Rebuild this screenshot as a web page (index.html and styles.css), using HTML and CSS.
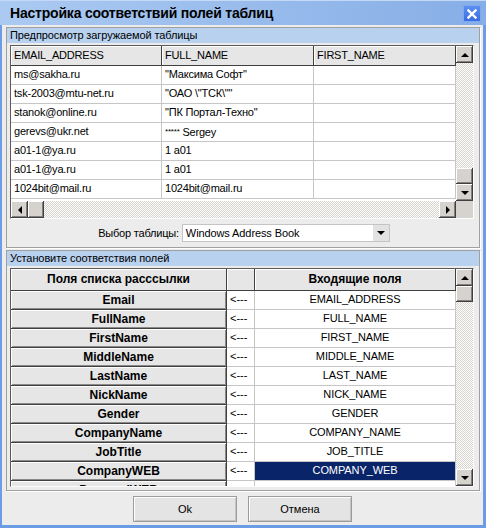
FILE: index.html
```html
<!DOCTYPE html>
<html lang="ru">
<head>
<meta charset="utf-8">
<title>Настройка соответствий полей таблиц</title>
<link rel="stylesheet" href="styles.css">
</head>
<body>
<div class="window">
  <div class="titlebar">
    <span class="title">Настройка соответствий полей таблиц</span>
    <div class="close">
      <svg width="10" height="10" viewBox="0 0 10 10"><path d="M1.5 1.5 L8.5 8.5 M8.5 1.5 L1.5 8.5" stroke="#fff" stroke-width="2.4" stroke-linecap="square"/></svg>
    </div>
  </div>
  <div class="frame">
    <section class="group g1">
      <div class="group-head">Предпросмотр загружаемой таблицы</div>
      <div class="gridframe gf1">
        <div class="grid-top">
          <div class="cells">
            <div class="row head3">
              <div class="hc">EMAIL_ADDRESS</div><div class="hc">FULL_NAME</div><div class="hc">FIRST_NAME</div>
            </div>
            <div class="row data3"><div class="dc">ms@sakha.ru</div><div class="dc">"Максима Софт"</div><div class="dc"></div></div>
            <div class="row data3"><div class="dc">tsk-2003@mtu-net.ru</div><div class="dc">"ОАО \"ТСК\""</div><div class="dc"></div></div>
            <div class="row data3"><div class="dc">stanok@online.ru</div><div class="dc">"ПК Портал-Техно"</div><div class="dc"></div></div>
            <div class="row data3"><div class="dc">gerevs@ukr.net</div><div class="dc"><span class="stars">*****</span> Sergey</div><div class="dc"></div></div>
            <div class="row data3"><div class="dc">a01-1@ya.ru</div><div class="dc">1 a01</div><div class="dc"></div></div>
            <div class="row data3"><div class="dc">a01-1@ya.ru</div><div class="dc">1 a01</div><div class="dc"></div></div>
            <div class="row data3"><div class="dc">1024bit@mail.ru</div><div class="dc">1024bit@mail.ru</div><div class="dc"></div></div>
          </div>
          <div class="vscroll vs1">
            <div class="sbtn"><span class="arr up"></span></div>
            <div class="track"></div>
            <div class="sbtn thumb"></div>
            <div class="sbtn"><span class="arr down"></span></div>
          </div>
        </div>
        <div class="grid-bottom">
          <div class="hscroll">
            <div class="sbtn"><span class="arr left"></span></div>
            <div class="sbtn thumb"></div>
            <div class="track"></div>
            <div class="sbtn"><span class="arr right"></span></div>
          </div>
          <div class="corner"></div>
        </div>
      </div>
      <div class="combo-row">
        <span class="combo-label">Выбор таблицы:</span>
        <div class="combo">
          <span class="combo-text">Windows Address Book</span>
          <span class="combo-btn"><span class="arr down"></span></span>
        </div>
      </div>
    </section>

    <section class="group g2">
      <div class="group-head">Установите соответствия полей</div>
      <div class="gridframe gf2">
        <div class="cells map">
          <div class="row mrow mhead">
            <div class="mh">Поля списка расссылки</div><div class="mh"></div><div class="mh">Входящие поля</div>
          </div>
          <div class="row mrow"><div class="mk">Email</div><div class="ma">&lt;---</div><div class="mv">EMAIL_ADDRESS</div></div>
          <div class="row mrow"><div class="mk">FullName</div><div class="ma">&lt;---</div><div class="mv">FULL_NAME</div></div>
          <div class="row mrow"><div class="mk">FirstName</div><div class="ma">&lt;---</div><div class="mv">FIRST_NAME</div></div>
          <div class="row mrow"><div class="mk">MiddleName</div><div class="ma">&lt;---</div><div class="mv">MIDDLE_NAME</div></div>
          <div class="row mrow"><div class="mk">LastName</div><div class="ma">&lt;---</div><div class="mv">LAST_NAME</div></div>
          <div class="row mrow"><div class="mk">NickName</div><div class="ma">&lt;---</div><div class="mv">NICK_NAME</div></div>
          <div class="row mrow"><div class="mk">Gender</div><div class="ma">&lt;---</div><div class="mv">GENDER</div></div>
          <div class="row mrow"><div class="mk">CompanyName</div><div class="ma">&lt;---</div><div class="mv">COMPANY_NAME</div></div>
          <div class="row mrow"><div class="mk">JobTitle</div><div class="ma">&lt;---</div><div class="mv">JOB_TITLE</div></div>
          <div class="row mrow"><div class="mk">CompanyWEB</div><div class="ma">&lt;---</div><div class="mv sel">COMPANY_WEB</div></div>
          <div class="row mrow"><div class="mk">PersonalWEB</div><div class="ma">&lt;---</div><div class="mv"></div></div>
        </div>
        <div class="vscroll vs2">
          <div class="sbtn"><span class="arr up"></span></div>
          <div class="sbtn thumb"></div>
          <div class="track"></div>
          <div class="sbtn"><span class="arr down"></span></div>
        </div>
      </div>
    </section>

    <div class="buttons">
      <div class="btn">Ok</div>
      <div class="btn">Отмена</div>
    </div>
  </div>
</div>
</body>
</html>
```
FILE: styles.css
```css
* { box-sizing: border-box; }
html, body { margin: 0; padding: 0; }
body {
  width: 486px;
  height: 528px;
  overflow: hidden;
  font-family: "Liberation Sans", Arial, sans-serif;
  font-size: 11px;
  color: #000;
  background: #ececec;
}
.window {
  width: 486px;
  height: 528px;
  display: flex;
  flex-direction: column;
}
.titlebar {
  flex: none;
  height: 25px;
  background: linear-gradient(to right, #abcaf2, #87aee6);
  border-top: 1px solid #c3d9f6;
  display: flex;
  align-items: center;
  justify-content: space-between;
  padding: 0 5px 0 10px;
}
.title {
  font-weight: bold;
  font-size: 14px;
  letter-spacing: -0.2px;
}
.close {
  width: 18px;
  height: 17px;
  margin-top: 1px;
  background: linear-gradient(#5b8ff0, #3a6de0);
  border: 1px solid #7ea8f3;
  display: flex;
  align-items: center;
  justify-content: center;
}
.frame {
  flex: 1;
  border-style: solid;
  border-color: #6d9ce6;
  border-width: 0 3px 3px 2px;
  background: #ececec;
  padding: 2px 3px 0 4px;
  display: flex;
  flex-direction: column;
}
.group {
  border: 1px solid #a0a0a0;
  box-shadow: 1px 1px 0 #fff;
  display: flex;
  flex-direction: column;
  flex: none;
}
.g1 { height: 221px; }
.g2 { height: 241px; margin-top: 2px; }
.group-head {
  height: 15px;
  line-height: 15px;
  background: #b8d1ef;
  padding-left: 3px;
  letter-spacing: -0.1px;
}
.gridframe {
  width: 464px;
  margin: 2px 0 0 3px;
  border: 1px solid;
  border-color: #5a5a5a #fdfdfd #fdfdfd #5a5a5a;
  background: #fff;
  flex: none;
}
.gf1 { height: 174px; display: flex; flex-direction: column; }
.gf2 { height: 219px; display: flex; }
.grid-top { display: flex; height: 155px; }
.cells { width: 445px; overflow: hidden; background: #fff; }
.row { display: grid; }
.head3, .data3 { grid-template-columns: 151px 152px 142px; }
.hc {
  height: 20px;
  line-height: 19px;
  padding-left: 3px;
  background: #e6e6e6;
  border-right: 1px solid #404040;
  border-bottom: 1px solid #404040;
  box-shadow: inset 1px 1px #fff;
  letter-spacing: -0.2px;
  white-space: nowrap;
  overflow: hidden;
}
.dc {
  height: 19px;
  line-height: 17px;
  padding-left: 3px;
  border-right: 1px solid #c6c6c6;
  border-bottom: 1px solid #c6c6c6;
  white-space: nowrap;
  overflow: hidden;
  letter-spacing: -0.2px;
}
.stars { font-size: 8px; vertical-align: 2px; }
.vscroll {
  width: 17px;
  display: flex;
  flex-direction: column;
  flex: none;
}
.vs1 { height: 155px; }
.vs2 { height: 217px; }
.sbtn {
  width: 17px;
  height: 17px;
  flex: none;
  background: #d6d3ce;
  box-shadow: inset -1px -1px #404040, inset 1px 1px #fff, inset -2px -2px #808080;
  display: flex;
  align-items: center;
  justify-content: center;
}
.thumb { height: 16px; }
.hscroll .thumb { width: 16px; height: 17px; }
.track {
  flex: 1;
  background-color: #fff;
  background-image: conic-gradient(#fff 25%, #d6d3ce 0 50%, #fff 0 75%, #d6d3ce 0);
  background-size: 2px 2px;
}
.grid-bottom { display: flex; height: 17px; }
.hscroll { width: 445px; display: flex; }
.corner { flex: 1; background: #d6d3ce; }
.arr { width: 0; height: 0; display: block; }
.arr.up { border-left: 4px solid transparent; border-right: 4px solid transparent; border-bottom: 4px solid #000; }
.arr.down { border-left: 4px solid transparent; border-right: 4px solid transparent; border-top: 4px solid #000; }
.arr.left { border-top: 4px solid transparent; border-bottom: 4px solid transparent; border-right: 4px solid #000; }
.arr.right { border-top: 4px solid transparent; border-bottom: 4px solid transparent; border-left: 4px solid #000; }
.combo-row {
  flex: 1;
  display: flex;
  align-items: center;
  justify-content: center;
  gap: 3px;
  padding-left: 2px;
}
.combo-label { letter-spacing: -0.2px; }
.combo {
  width: 208px;
  height: 18px;
  background: #fff;
  border: 1px solid #c4c4c4;
  display: flex;
  align-items: center;
  justify-content: space-between;
  padding-left: 3px;
}
.combo-text { letter-spacing: -0.1px; }
.combo-btn {
  width: 16px;
  height: 16px;
  background: #e2e2e2;
  display: flex;
  align-items: center;
  justify-content: center;
}
.map { height: 217px; }
.mrow { grid-template-columns: 216px 28px 201px; }
.mh {
  height: 22px;
  line-height: 21px;
  text-align: center;
  font-weight: bold;
  font-size: 12px;
  background: #e6e6e6;
  border-right: 1px solid #404040;
  border-bottom: 1px solid #404040;
  box-shadow: inset 1px 1px #fff;
  white-space: nowrap;
}
.mk {
  height: 19px;
  line-height: 18px;
  text-align: center;
  font-weight: bold;
  font-size: 12px;
  background: #e6e6e6;
  border-right: 1px solid #404040;
  border-bottom: 1px solid #404040;
  box-shadow: inset 1px 1px #fff, inset -1px -1px #8a8a8a;
  white-space: nowrap;
}
.ma, .mv {
  height: 19px;
  line-height: 17px;
  border-right: 1px solid #c6c6c6;
  border-bottom: 1px solid #c6c6c6;
  white-space: nowrap;
  overflow: hidden;
}
.ma { padding-left: 3px; }
.mv { text-align: center; letter-spacing: -0.1px; }
.mv.sel { background: #0a246a; color: #fff; }
.buttons {
  display: flex;
  justify-content: center;
  gap: 11px;
  margin-top: 5px;
  padding-right: 1px;
}
.btn {
  width: 104px;
  height: 26px;
  line-height: 24px;
  text-align: center;
  background: #e4e4e4;
  border: 1px solid #9c9c9c;
  box-shadow: inset 1px 1px #fff, inset -1px -1px #c4c4c4;
}
```
